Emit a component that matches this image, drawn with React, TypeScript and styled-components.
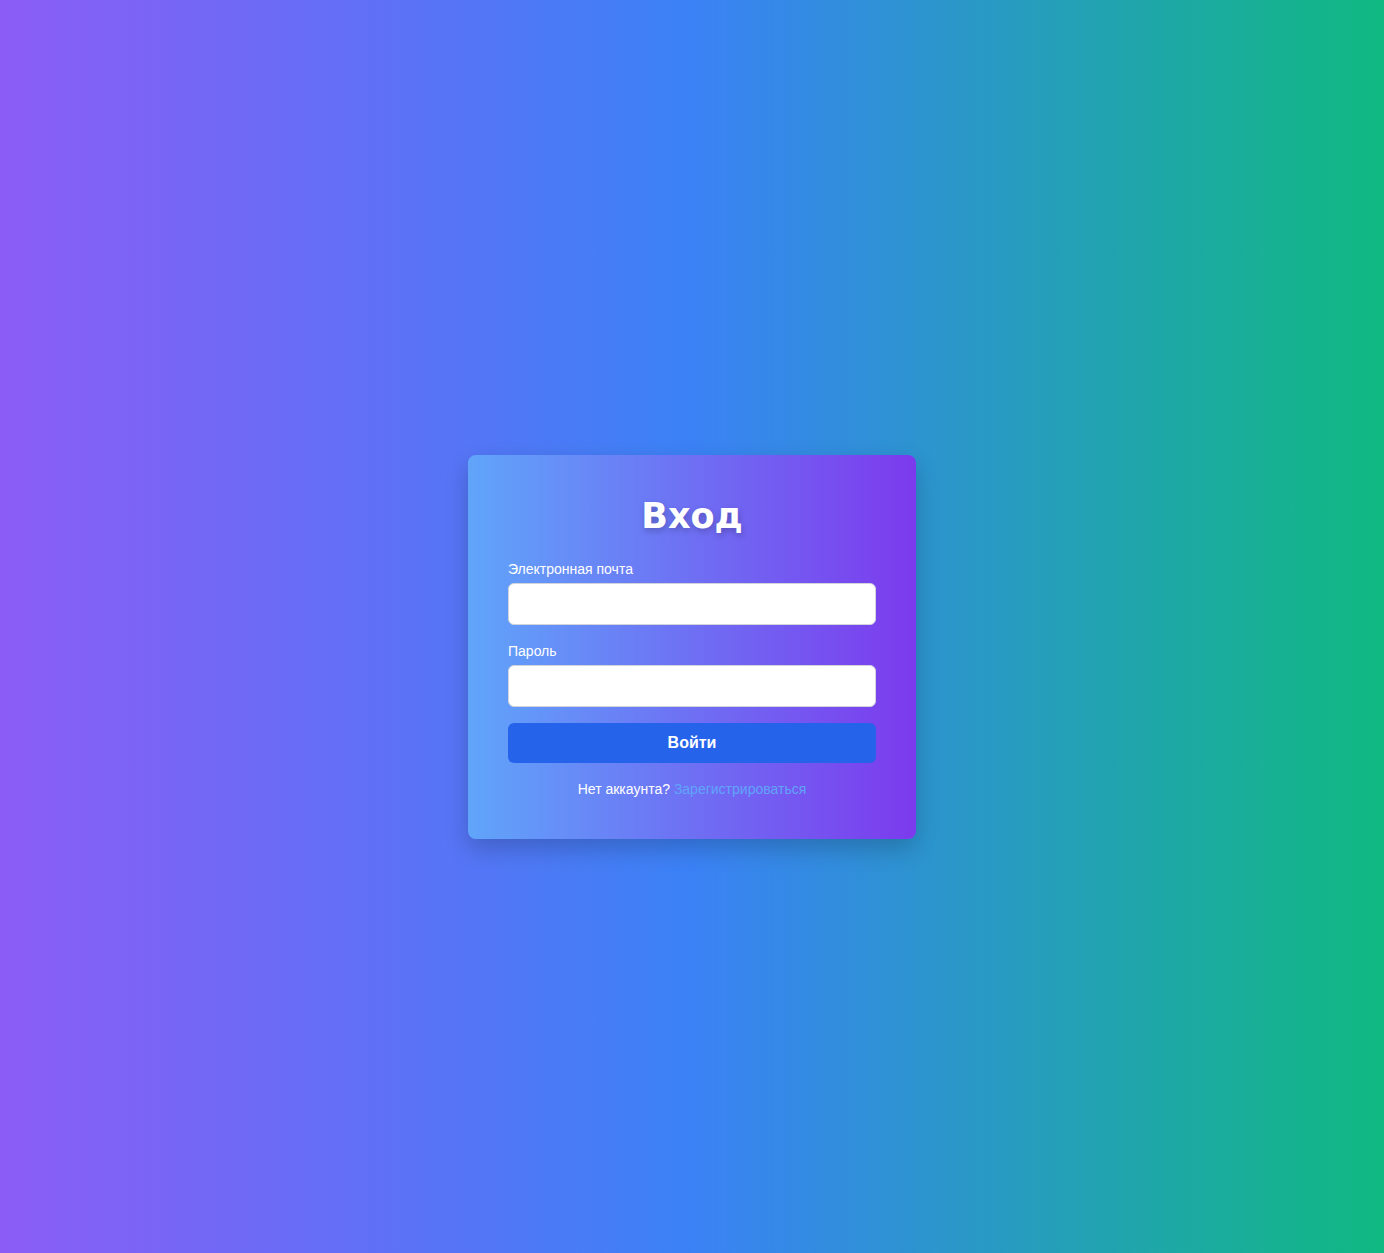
import React from 'react';
import styled, { createGlobalStyle } from 'styled-components';

const GlobalStyle = createGlobalStyle`
  * {
    box-sizing: border-box;
  }
  body {
    margin: 0;
    font-family: 'Liberation Sans', Arial, sans-serif;
  }
`;

const StyledPage = styled.div`
  display: flex;
  align-items: center;
  justify-content: center;
  min-height: 1253px;
  padding-top: 41px;
  background: linear-gradient(to right, #8b5cf6, #3b82f6, #10b981);
`;

const StyledCard = styled.form`
  width: 448px;
  padding: 40px;
  border-radius: 8px;
  background: linear-gradient(to right, #60a5fa, #7c3aed);
  box-shadow: 0 10px 25px rgba(0, 0, 0, 0.2);
`;

const StyledTitle = styled.h1`
  margin: 0 0 24px;
  font-family: 'DejaVu Sans', sans-serif;
  font-size: 35px;
  font-weight: 700;
  line-height: 42px;
  text-align: center;
  color: #ffffff;
  text-shadow: 1px 3px 6px rgba(0, 0, 0, 0.22);
`;

const StyledField = styled.div`
  margin-bottom: ${({ $gap }: { $gap: number }) => $gap}px;
`;

const StyledLabel = styled.label`
  display: block;
  margin-bottom: 6px;
  font-size: 14px;
  line-height: 16px;
  color: #ffffff;
`;

const StyledInput = styled.input`
  display: block;
  width: 100%;
  height: 42px;
  padding: 0 12px;
  border: 1px solid #d1d5db;
  border-radius: 6px;
  background: #ffffff;
  font-family: inherit;
  font-size: 16px;
  outline: none;
`;

const StyledButton = styled.button`
  display: block;
  width: 100%;
  height: 40px;
  border: none;
  border-radius: 6px;
  background-color: #2563eb;
  font-family: inherit;
  font-size: 16px;
  font-weight: 700;
  color: #ffffff;
  cursor: pointer;
`;

const StyledFooter = styled.p`
  margin: 16px 0 0;
  font-size: 14px;
  line-height: 20px;
  text-align: center;
  color: #ffffff;
`;

const StyledLink = styled.a`
  color: #60a5fa;
  text-decoration: none;
`;

export default function App() {
  return (
    <>
      <GlobalStyle />
      <StyledPage>
        <StyledCard onSubmit={(e) => e.preventDefault()}>
          <StyledTitle>Вход</StyledTitle>
          <StyledField $gap={18}>
            <StyledLabel htmlFor="email">Электронная почта</StyledLabel>
            <StyledInput id="email" type="email" />
          </StyledField>
          <StyledField $gap={16}>
            <StyledLabel htmlFor="password">Пароль</StyledLabel>
            <StyledInput id="password" type="password" />
          </StyledField>
          <StyledButton type="submit">Войти</StyledButton>
          <StyledFooter>
            Нет аккаунта? <StyledLink href="#">Зарегистрироваться</StyledLink>
          </StyledFooter>
        </StyledCard>
      </StyledPage>
    </>
  );
}
